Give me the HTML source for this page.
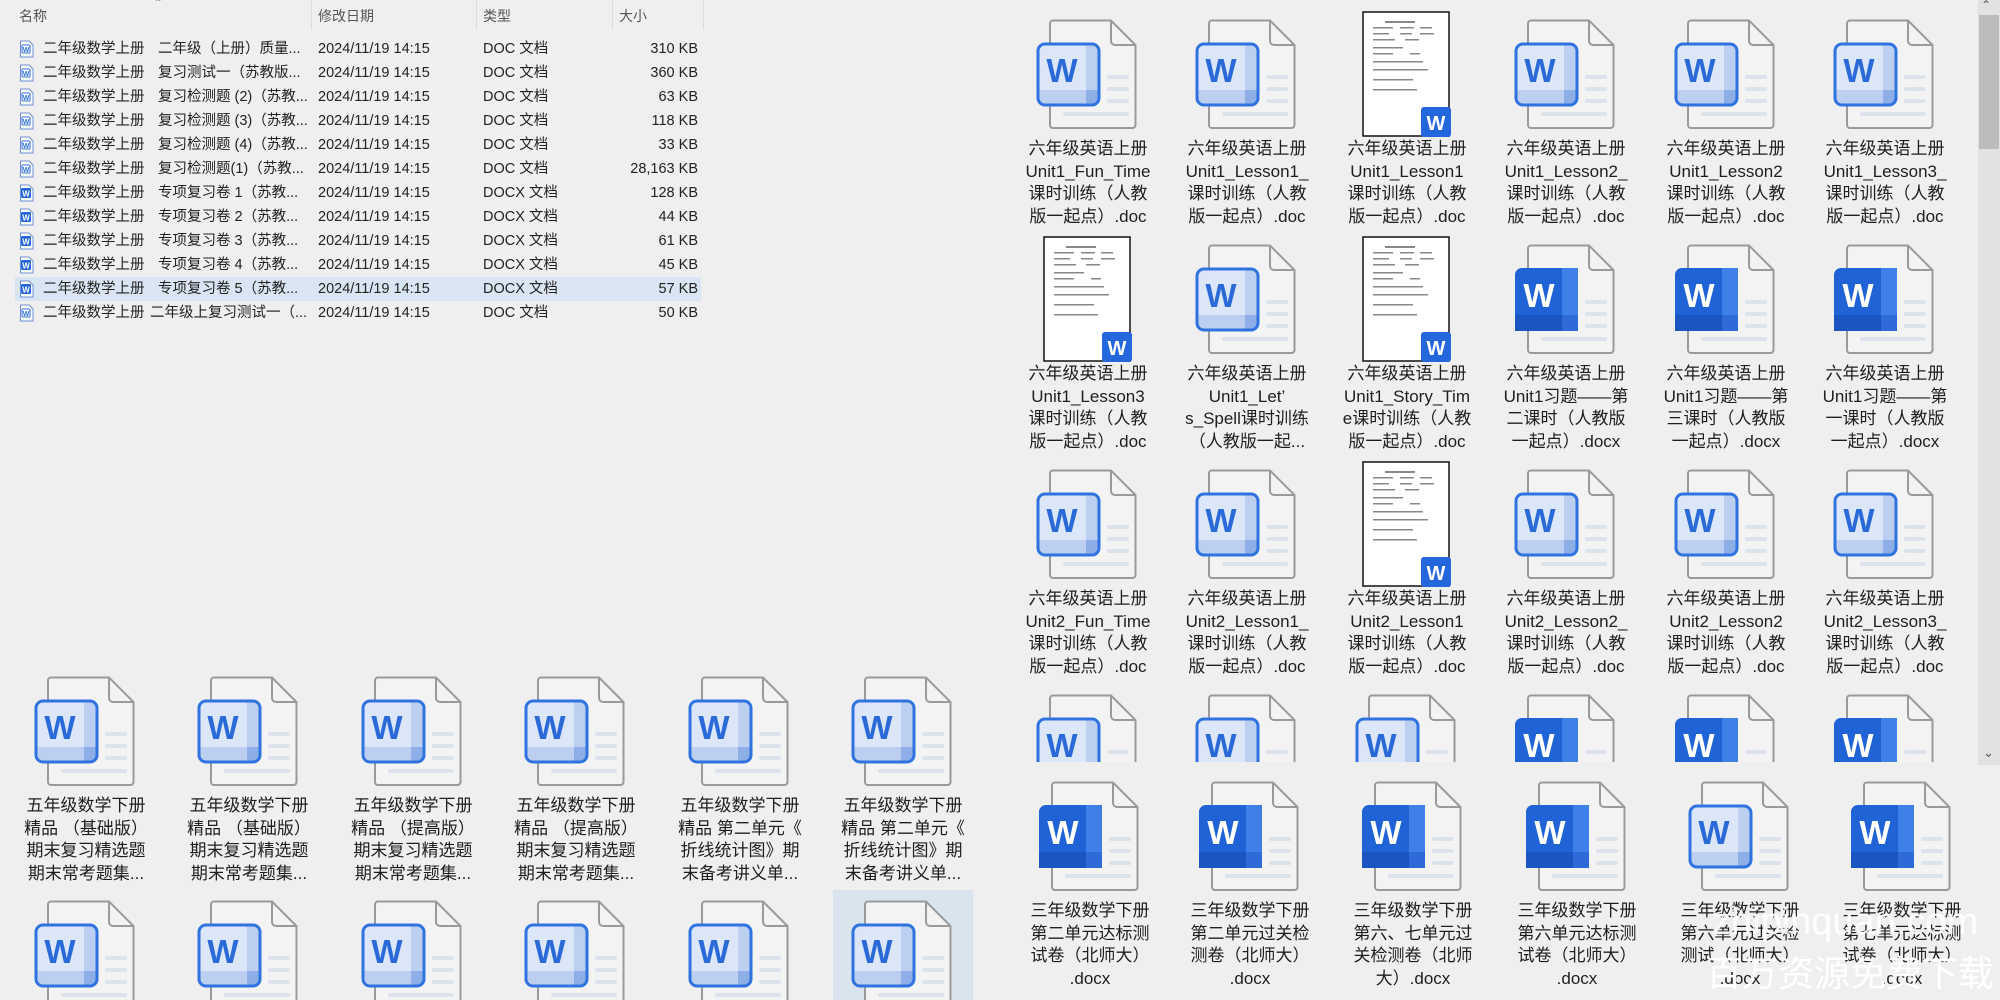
<!DOCTYPE html>
<html><head><meta charset="utf-8">
<style>
*{margin:0;padding:0;box-sizing:border-box}
body{width:2000px;height:1000px;overflow:hidden;background:#efefef;font-family:"Liberation Sans","Noto Sans CJK SC",sans-serif;color:#1e1e1e;position:relative}
.a{position:absolute}
.hd{position:absolute;top:6px;font-size:14px;color:#555}
.sep{position:absolute;top:0;width:1px;height:30px;background:#dcdcdc}
.row{position:absolute;left:15px;width:686px;height:24px;font-size:14.5px;line-height:24px;color:#222;white-space:nowrap}
.row span{position:absolute;top:0}
.row .ic{left:4px;top:3px;width:15px;height:18px}
.row .n1{left:28px}.row .n2{left:143px}.row .d{left:303px}.row .t{left:468px}.row .s{right:3px}
.it{position:absolute;width:176px;margin-left:-88px;text-align:center}
.it svg{position:absolute;left:36px;top:0;overflow:visible}
.it .tx{position:absolute;left:0;top:119px;width:176px;font-size:17px;line-height:22.6px;color:#1e1e1e}
</style></head><body>
<svg width="0" height="0" style="position:absolute">
<defs>
<symbol id="pg" viewBox="0 0 104 112" overflow="visible">
<path d="M17,1.5 H75 L99.5,26 V106 a3,3 0 0 1 -3,3 H17 a3,3 0 0 1 -3,-3 V4.5 a3,3 0 0 1 3,-3z" fill="#f3f3f3" stroke="#9a9a9a" stroke-width="2"/>
<path d="M75,1.5 V22 a4,4 0 0 0 4,4 H99.5" fill="none" stroke="#9a9a9a" stroke-width="2"/>
<rect x="71" y="56" width="22" height="4" rx="2" fill="#dde3ec"/>
<rect x="71" y="68" width="22" height="4" rx="2" fill="#dde3ec"/>
<rect x="71" y="80" width="22" height="4" rx="2" fill="#dde3ec"/>
<rect x="27" y="93" width="66" height="4" rx="2" fill="#dde3ec"/>
</symbol>
<symbol id="lw" viewBox="0 0 104 112" overflow="visible">
<use href="#pg" width="104" height="112"/>
<rect x="2" y="25" width="61" height="61" rx="7" fill="#dbe6f8"/>
<rect x="50" y="26" width="12" height="59" fill="#bccff0"/>
<rect x="3" y="71" width="59" height="14" fill="#bccff0"/>
<rect x="50" y="71" width="12" height="14" fill="#8eaee8"/>
<rect x="2" y="25" width="61" height="61" rx="7" fill="none" stroke="#2f73e0" stroke-width="3"/>
<text x="26" y="63" text-anchor="middle" font-family="Liberation Sans" font-weight="bold" font-size="33" fill="#2a6ad8">W</text>
</symbol>
<symbol id="sw" viewBox="0 0 104 112" overflow="visible">
<use href="#pg" width="104" height="112"/>
<rect x="1" y="24" width="63" height="63" rx="7" fill="#1f63d6"/>
<rect x="48" y="24" width="16" height="63" fill="#3f7fe8"/>
<rect x="1" y="71" width="63" height="16" fill="#1a55c2"/>
<rect x="48" y="71" width="16" height="16" fill="#2f6bd8"/>
<text x="25" y="63" text-anchor="middle" font-family="Liberation Sans" font-weight="bold" font-size="33" fill="#fff">W</text>
</symbol>
<symbol id="th" viewBox="0 0 104 112" overflow="visible">
<rect x="8" y="-7" width="86" height="124" fill="#fff" stroke="#111" stroke-width="1.5"/>
<g fill="#888">
<rect x="30" y="2" width="30" height="2"/><rect x="18" y="8" width="20" height="1.5"/><rect x="45" y="8" width="14" height="1.5"/><rect x="65" y="8" width="12" height="1.5"/>
<rect x="18" y="14" width="16" height="1.5"/><rect x="45" y="14" width="12" height="1.5"/><rect x="65" y="14" width="14" height="1.5"/>
<rect x="18" y="20" width="22" height="1.5"/><rect x="50" y="20" width="14" height="1.5"/>
<rect x="18" y="28" width="30" height="1.5"/><rect x="18" y="34" width="20" height="1.5"/><rect x="55" y="34" width="10" height="1.5"/>
<rect x="18" y="42" width="50" height="1.5"/><rect x="18" y="50" width="55" height="1.5"/><rect x="18" y="60" width="40" height="1.5"/><rect x="18" y="70" width="44" height="1.5"/>
</g>
<rect x="66" y="88" width="30" height="30" rx="3" fill="#2467dc"/>
<text x="81" y="111" text-anchor="middle" font-family="Liberation Sans" font-weight="bold" font-size="20" fill="#fff">W</text>
</symbol>
<symbol id="sm" viewBox="0 0 15 18"><path d="M1.5,1 H10 L14,5 V17 H1.5z" fill="#fff" stroke="#6b8fd0"/><rect x="3" y="5" width="8" height="8" rx="1" fill="none" stroke="#2f6fd8"/><text x="7" y="12" text-anchor="middle" font-size="7" font-weight="bold" fill="#2f6fd8" font-family="Liberation Sans">W</text></symbol>
<symbol id="smx" viewBox="0 0 15 18"><path d="M1.5,1 H10 L14,5 V17 H1.5z" fill="#fff" stroke="#6b8fd0"/><rect x="2" y="4" width="10" height="10" rx="1.5" fill="#2466d8"/><text x="7" y="12.5" text-anchor="middle" font-size="8" font-weight="bold" fill="#fff" font-family="Liberation Sans">W</text></symbol>
</defs></svg>

<!-- list header -->
<div class="hd" style="left:19px">名称</div>
<div class="a" style="left:156px;top:-4px;font-size:14px;color:#777">&#710;</div>
<div class="sep" style="left:311px"></div>
<div class="hd" style="left:318px">修改日期</div>
<div class="sep" style="left:476px"></div>
<div class="hd" style="left:483px">类型</div>
<div class="sep" style="left:612px"></div>
<div class="hd" style="left:619px">大小</div>
<div class="sep" style="left:703px"></div>

<div class="a" style="left:15px;top:277px;width:686px;height:24px;background:#d9e5f2"></div>

<div class="row" style="top:37px"><svg class="ic" style="position:absolute"><use href="#sm"/></svg><span class="n1">二年级数学上册</span><span class="n2">二年级（上册）质量...</span><span class="d">2024/11/19 14:15</span><span class="t">DOC 文档</span><span class="s">310 KB</span></div>
<div class="row" style="top:61px"><svg class="ic" style="position:absolute"><use href="#sm"/></svg><span class="n1">二年级数学上册</span><span class="n2">复习测试一（苏教版...</span><span class="d">2024/11/19 14:15</span><span class="t">DOC 文档</span><span class="s">360 KB</span></div>
<div class="row" style="top:85px"><svg class="ic" style="position:absolute"><use href="#sm"/></svg><span class="n1">二年级数学上册</span><span class="n2">复习检测题 (2)（苏教...</span><span class="d">2024/11/19 14:15</span><span class="t">DOC 文档</span><span class="s">63 KB</span></div>
<div class="row" style="top:109px"><svg class="ic" style="position:absolute"><use href="#sm"/></svg><span class="n1">二年级数学上册</span><span class="n2">复习检测题 (3)（苏教...</span><span class="d">2024/11/19 14:15</span><span class="t">DOC 文档</span><span class="s">118 KB</span></div>
<div class="row" style="top:133px"><svg class="ic" style="position:absolute"><use href="#sm"/></svg><span class="n1">二年级数学上册</span><span class="n2">复习检测题 (4)（苏教...</span><span class="d">2024/11/19 14:15</span><span class="t">DOC 文档</span><span class="s">33 KB</span></div>
<div class="row" style="top:157px"><svg class="ic" style="position:absolute"><use href="#sm"/></svg><span class="n1">二年级数学上册</span><span class="n2">复习检测题(1)（苏教...</span><span class="d">2024/11/19 14:15</span><span class="t">DOC 文档</span><span class="s">28,163 KB</span></div>
<div class="row" style="top:181px"><svg class="ic" style="position:absolute"><use href="#smx"/></svg><span class="n1">二年级数学上册</span><span class="n2">专项复习卷 1（苏教...</span><span class="d">2024/11/19 14:15</span><span class="t">DOCX 文档</span><span class="s">128 KB</span></div>
<div class="row" style="top:205px"><svg class="ic" style="position:absolute"><use href="#smx"/></svg><span class="n1">二年级数学上册</span><span class="n2">专项复习卷 2（苏教...</span><span class="d">2024/11/19 14:15</span><span class="t">DOCX 文档</span><span class="s">44 KB</span></div>
<div class="row" style="top:229px"><svg class="ic" style="position:absolute"><use href="#smx"/></svg><span class="n1">二年级数学上册</span><span class="n2">专项复习卷 3（苏教...</span><span class="d">2024/11/19 14:15</span><span class="t">DOCX 文档</span><span class="s">61 KB</span></div>
<div class="row" style="top:253px"><svg class="ic" style="position:absolute"><use href="#smx"/></svg><span class="n1">二年级数学上册</span><span class="n2">专项复习卷 4（苏教...</span><span class="d">2024/11/19 14:15</span><span class="t">DOCX 文档</span><span class="s">45 KB</span></div>
<div class="row" style="top:277px"><svg class="ic" style="position:absolute"><use href="#smx"/></svg><span class="n1">二年级数学上册</span><span class="n2">专项复习卷 5（苏教...</span><span class="d">2024/11/19 14:15</span><span class="t">DOCX 文档</span><span class="s">57 KB</span></div>
<div class="row" style="top:301px"><svg class="ic" style="position:absolute"><use href="#sm"/></svg><span class="n1">二年级数学上册</span><span class="n2" style="left:135px">二年级上复习测试一（...</span><span class="d">2024/11/19 14:15</span><span class="t">DOC 文档</span><span class="s">50 KB</span></div>

<!-- bottom-left grid -->
<div class="a" style="left:0;top:640px;width:982px;height:360px;overflow:hidden">
<div class="a" style="left:833px;top:250px;width:140px;height:120px;background:#d9e4ee"></div>
<div class="it" style="left:86px;top:36px"><svg width="104" height="112"><use href="#lw"/></svg><div class="tx">五年级数学下册<br>精品 （基础版）<br>期末复习精选题<br>期末常考题集...</div></div>
<div class="it" style="left:249px;top:36px"><svg width="104" height="112"><use href="#lw"/></svg><div class="tx">五年级数学下册<br>精品 （基础版）<br>期末复习精选题<br>期末常考题集...</div></div>
<div class="it" style="left:413px;top:36px"><svg width="104" height="112"><use href="#lw"/></svg><div class="tx">五年级数学下册<br>精品 （提高版）<br>期末复习精选题<br>期末常考题集...</div></div>
<div class="it" style="left:576px;top:36px"><svg width="104" height="112"><use href="#lw"/></svg><div class="tx">五年级数学下册<br>精品 （提高版）<br>期末复习精选题<br>期末常考题集...</div></div>
<div class="it" style="left:740px;top:36px"><svg width="104" height="112"><use href="#lw"/></svg><div class="tx">五年级数学下册<br>精品 第二单元《<br>折线统计图》期<br>末备考讲义单...</div></div>
<div class="it" style="left:903px;top:36px"><svg width="104" height="112"><use href="#lw"/></svg><div class="tx">五年级数学下册<br>精品 第二单元《<br>折线统计图》期<br>末备考讲义单...</div></div>
<div class="it" style="left:86px;top:260px"><svg width="104" height="112"><use href="#lw"/></svg></div>
<div class="it" style="left:249px;top:260px"><svg width="104" height="112"><use href="#lw"/></svg></div>
<div class="it" style="left:413px;top:260px"><svg width="104" height="112"><use href="#lw"/></svg></div>
<div class="it" style="left:576px;top:260px"><svg width="104" height="112"><use href="#lw"/></svg></div>
<div class="it" style="left:740px;top:260px"><svg width="104" height="112"><use href="#lw"/></svg></div>
<div class="it" style="left:903px;top:260px"><svg width="104" height="112"><use href="#lw"/></svg></div>
</div>

<!-- right top grid -->
<div class="a" style="left:982px;top:0;width:996px;height:762px;overflow:hidden">
<div class="it" style="left:106px;top:19px"><svg width="104" height="112"><use href="#lw"/></svg><div class="tx">六年级英语上册<br>Unit1_Fun_Time<br>课时训练（人教<br>版一起点）.doc</div></div>
<div class="it" style="left:265px;top:19px"><svg width="104" height="112"><use href="#lw"/></svg><div class="tx">六年级英语上册<br>Unit1_Lesson1_<br>课时训练（人教<br>版一起点）.doc</div></div>
<div class="it" style="left:425px;top:19px"><svg width="104" height="112"><use href="#th"/></svg><div class="tx">六年级英语上册<br>Unit1_Lesson1<br>课时训练（人教<br>版一起点）.doc</div></div>
<div class="it" style="left:584px;top:19px"><svg width="104" height="112"><use href="#lw"/></svg><div class="tx">六年级英语上册<br>Unit1_Lesson2_<br>课时训练（人教<br>版一起点）.doc</div></div>
<div class="it" style="left:744px;top:19px"><svg width="104" height="112"><use href="#lw"/></svg><div class="tx">六年级英语上册<br>Unit1_Lesson2<br>课时训练（人教<br>版一起点）.doc</div></div>
<div class="it" style="left:903px;top:19px"><svg width="104" height="112"><use href="#lw"/></svg><div class="tx">六年级英语上册<br>Unit1_Lesson3_<br>课时训练（人教<br>版一起点）.doc</div></div>

<div class="it" style="left:106px;top:244px"><svg width="104" height="112"><use href="#th"/></svg><div class="tx">六年级英语上册<br>Unit1_Lesson3<br>课时训练（人教<br>版一起点）.doc</div></div>
<div class="it" style="left:265px;top:244px"><svg width="104" height="112"><use href="#lw"/></svg><div class="tx">六年级英语上册<br>Unit1_Let’<br>s_Spell课时训练<br>（人教版一起...</div></div>
<div class="it" style="left:425px;top:244px"><svg width="104" height="112"><use href="#th"/></svg><div class="tx">六年级英语上册<br>Unit1_Story_Tim<br>e课时训练（人教<br>版一起点）.doc</div></div>
<div class="it" style="left:584px;top:244px"><svg width="104" height="112"><use href="#sw"/></svg><div class="tx">六年级英语上册<br>Unit1习题——第<br>二课时（人教版<br>一起点）.docx</div></div>
<div class="it" style="left:744px;top:244px"><svg width="104" height="112"><use href="#sw"/></svg><div class="tx">六年级英语上册<br>Unit1习题——第<br>三课时（人教版<br>一起点）.docx</div></div>
<div class="it" style="left:903px;top:244px"><svg width="104" height="112"><use href="#sw"/></svg><div class="tx">六年级英语上册<br>Unit1习题——第<br>一课时（人教版<br>一起点）.docx</div></div>

<div class="it" style="left:106px;top:469px"><svg width="104" height="112"><use href="#lw"/></svg><div class="tx">六年级英语上册<br>Unit2_Fun_Time<br>课时训练（人教<br>版一起点）.doc</div></div>
<div class="it" style="left:265px;top:469px"><svg width="104" height="112"><use href="#lw"/></svg><div class="tx">六年级英语上册<br>Unit2_Lesson1_<br>课时训练（人教<br>版一起点）.doc</div></div>
<div class="it" style="left:425px;top:469px"><svg width="104" height="112"><use href="#th"/></svg><div class="tx">六年级英语上册<br>Unit2_Lesson1<br>课时训练（人教<br>版一起点）.doc</div></div>
<div class="it" style="left:584px;top:469px"><svg width="104" height="112"><use href="#lw"/></svg><div class="tx">六年级英语上册<br>Unit2_Lesson2_<br>课时训练（人教<br>版一起点）.doc</div></div>
<div class="it" style="left:744px;top:469px"><svg width="104" height="112"><use href="#lw"/></svg><div class="tx">六年级英语上册<br>Unit2_Lesson2<br>课时训练（人教<br>版一起点）.doc</div></div>
<div class="it" style="left:903px;top:469px"><svg width="104" height="112"><use href="#lw"/></svg><div class="tx">六年级英语上册<br>Unit2_Lesson3_<br>课时训练（人教<br>版一起点）.doc</div></div>

<div class="it" style="left:106px;top:694px"><svg width="104" height="112"><use href="#lw"/></svg></div>
<div class="it" style="left:265px;top:694px"><svg width="104" height="112"><use href="#lw"/></svg></div>
<div class="it" style="left:425px;top:694px"><svg width="104" height="112"><use href="#lw"/></svg></div>
<div class="it" style="left:584px;top:694px"><svg width="104" height="112"><use href="#sw"/></svg></div>
<div class="it" style="left:744px;top:694px"><svg width="104" height="112"><use href="#sw"/></svg></div>
<div class="it" style="left:903px;top:694px"><svg width="104" height="112"><use href="#sw"/></svg></div>
</div>

<!-- scrollbar -->
<div class="a" style="left:1978px;top:0;width:22px;height:765px;background:#e2e2e2"></div>
<div class="a" style="left:1979px;top:15px;width:20px;height:134px;background:#bcbcbc"></div>
<div class="a" style="left:1981px;top:-2px;font-size:12px;color:#555">&#8963;</div>
<div class="a" style="left:1983px;top:745px;font-size:13px;color:#555">&#8964;</div>

<!-- right bottom row -->
<div class="it" style="left:1090px;top:781px"><svg width="104" height="112"><use href="#sw"/></svg><div class="tx">三年级数学下册<br>第二单元达标测<br>试卷（北师大）<br>.docx</div></div>
<div class="it" style="left:1250px;top:781px"><svg width="104" height="112"><use href="#sw"/></svg><div class="tx">三年级数学下册<br>第二单元过关检<br>测卷（北师大）<br>.docx</div></div>
<div class="it" style="left:1413px;top:781px"><svg width="104" height="112"><use href="#sw"/></svg><div class="tx">三年级数学下册<br>第六、七单元过<br>关检测卷（北师<br>大）.docx</div></div>
<div class="it" style="left:1577px;top:781px"><svg width="104" height="112"><use href="#sw"/></svg><div class="tx">三年级数学下册<br>第六单元达标测<br>试卷（北师大）<br>.docx</div></div>
<div class="it" style="left:1740px;top:781px"><svg width="104" height="112"><use href="#lw"/></svg><div class="tx">三年级数学下册<br>第六单元过关检<br>测试（北师大）<br>.docx</div></div>
<div class="it" style="left:1902px;top:781px"><svg width="104" height="112"><use href="#sw"/></svg><div class="tx">三年级数学下册<br>第七单元达标测<br>试卷（北师大）<br>.docx</div></div>

<!-- watermark -->
<div class="a" style="left:1712px;top:900px;font-size:38px;line-height:44px;color:rgba(255,255,255,0.92);white-space:nowrap">zhipinquan.com</div>
<div class="a" style="left:1706px;top:950px;font-size:36px;line-height:42px;color:rgba(255,255,255,0.95);white-space:nowrap;font-family:'Noto Sans CJK SC',sans-serif">百万资源免费下载</div>
</body></html>
